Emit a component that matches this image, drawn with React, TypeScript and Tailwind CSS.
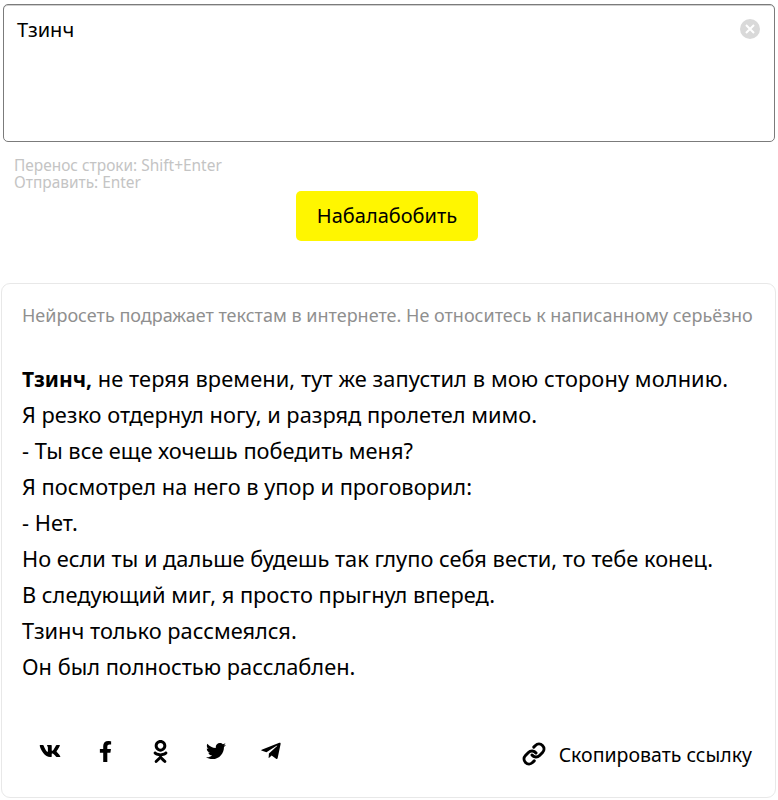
import { FaVk, FaFacebookF, FaOdnoklassniki, FaTwitter, FaTelegramPlane } from "react-icons/fa";
import { Link } from "lucide-react";

const lines = [
  "Я резко отдернул ногу, и разряд пролетел мимо.",
  "- Ты все еще хочешь победить меня?",
  "Я посмотрел на него в упор и проговорил:",
  "- Нет.",
  "Но если ты и дальше будешь так глупо себя вести, то тебе конец.",
  "В следующий миг, я просто прыгнул вперед.",
  "Тзинч только рассмеялся.",
  "Он был полностью расслаблен.",
];

export default function App() {
  return (
    <div className="w-[778px] h-[800px] bg-white pt-1 font-['Noto_Sans',sans-serif] text-black overflow-hidden">
      {/* Input */}
      <div className="mx-[3px] w-[772px] h-[138px] border border-[#7b7b7b] shadow-[inset_0_1px_0_#d0d0d0] rounded-[5px] flex justify-between pl-[13px] pr-[14px] pt-[10px]">
        <span className="text-[20px] leading-[30px]">Тзинч</span>
        <span className="mt-[4px] w-5 h-5 rounded-full bg-[#d9d9d9] flex items-center justify-center">
          <svg width="10" height="10" viewBox="0 0 10 10" fill="none" stroke="#fff" strokeWidth="2">
            <path d="M1 1l8 8M9 1l-8 8" />
          </svg>
        </span>
      </div>

      <div className="mt-[15px] ml-[14px] text-[15.45px] leading-[17px] text-[#c4c4c4]">
        <div>Перенос строки: Shift+Enter</div>
        <div>Отправить: Enter</div>
      </div>

      <div className="flex justify-center">
        <button className="ml-[-4px] w-[182px] h-[50px] bg-[#fff600] rounded-[5px] text-[20px]">Набалабобить</button>
      </div>

      {/* Result */}
      <div className="mt-[42px] ml-[1px] w-[775px] h-[515px] border border-[#e8e8e8] rounded-[9px] pl-[20px] pr-[23px] pt-[17px] flex flex-col">
        <p className="text-[18px] leading-[28px] text-[#8f8f8f] whitespace-nowrap">
          Нейросеть подражает текстам в интернете. Не относитесь к написанному серьёзно
        </p>
        <div className="mt-[32px] text-[21.8px] leading-[36px] whitespace-nowrap">
          <p>
            <b className="text-[21px]">Тзинч,</b> <span className="tracking-[0.1px]">не теряя времени, тут же запустил в мою сторону молнию.</span>
          </p>
          {lines.map((line) => (
            <p key={line}>{line}</p>
          ))}
        </div>
        <div className="mt-auto mb-[28px] flex items-center justify-between">
          <div className="flex items-center mb-[6px]">
            <span className="w-[55.4px] flex justify-center"><FaVk className="w-[22px] h-[22px]" /></span>
            <span className="w-[55.4px] flex justify-center"><FaFacebookF className="w-[21px] h-[21px]" /></span>
            <span className="w-[55.4px] flex justify-center"><FaOdnoklassniki className="w-[23px] h-[23px]" /></span>
            <span className="w-[55.4px] flex justify-center"><FaTwitter className="w-[20px] h-[20px]" /></span>
            <span className="w-[55.4px] flex justify-center"><FaTelegramPlane className="w-[22px] h-[22px]" /></span>
          </div>
          <div className="flex items-center gap-[13px] text-[19.5px]">
            <Link className="w-6 h-6" strokeWidth={3} />
            <span>Скопировать ссылку</span>
          </div>
        </div>
      </div>
    </div>
  );
}
